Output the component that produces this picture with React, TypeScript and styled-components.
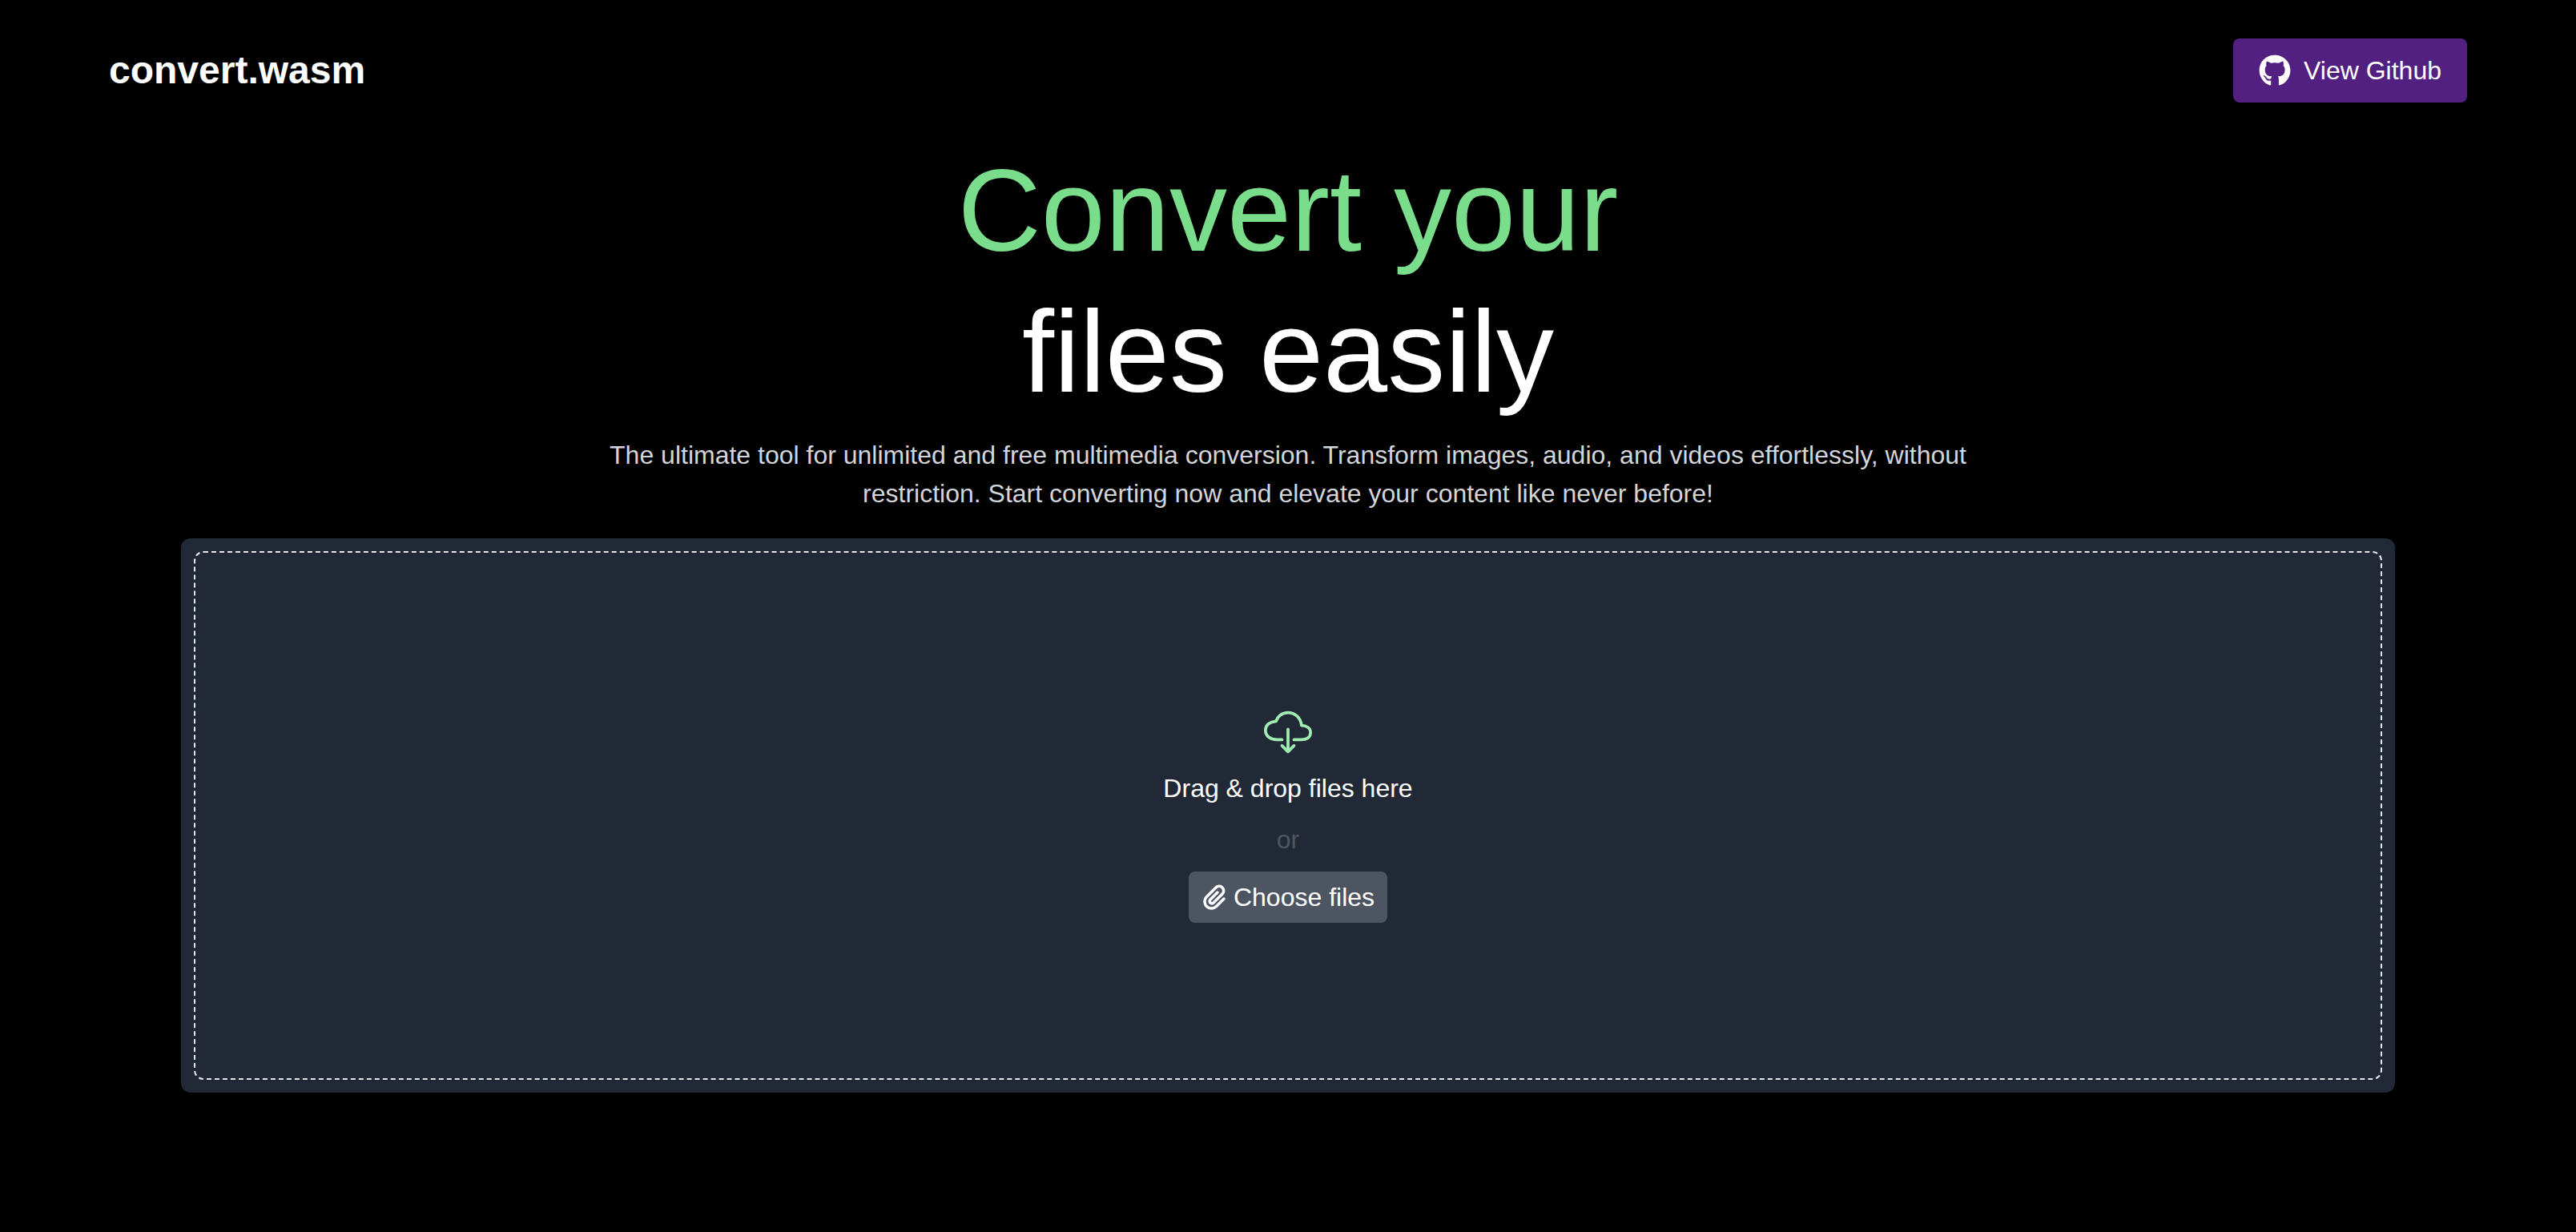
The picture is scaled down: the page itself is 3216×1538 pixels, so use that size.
import React, { useRef } from 'react';
import styled, { createGlobalStyle } from 'styled-components';
import { FaGithub, FaPaperclip } from 'react-icons/fa6';
import { IoCloudDownloadOutline } from 'react-icons/io5';

const GlobalStyle = createGlobalStyle`
  *, *::before, *::after {
    box-sizing: border-box;
  }

  body {
    margin: 0;
    background: #000;
    color: #fff;
    font-family: 'Liberation Sans', Arial, sans-serif;
    font-size: 32px;
    line-height: 48px;
  }
`;

const Page = styled.div`
  padding: 0 136px;
`;

const Header = styled.header`
  display: flex;
  align-items: center;
  justify-content: space-between;
  padding: 48px 0;
`;

const Brand = styled.span`
  font-size: 48px;
  line-height: 64px;
  font-weight: 700;
`;

const GithubLink = styled.a`
  display: flex;
  align-items: center;
  gap: 16px;
  padding: 16px 32px;
  border-radius: 8px;
  background: #522080;
  color: #fff;
  text-decoration: none;

  svg {
    width: 40px;
    height: 40px;
  }
`;

const Main = styled.main`
  display: flex;
  flex-direction: column;
  align-items: center;
  padding: 0 90px;
`;

const Title = styled.h1`
  display: flex;
  flex-direction: column;
  margin: 0 0 16px;
  font-size: 144px;
  line-height: 176px;
  font-weight: 400;
  text-align: center;
`;

const Highlight = styled.span`
  color: #7add8b;
`;

const Description = styled.p`
  max-width: 1792px;
  margin: 0 0 32px;
  color: #d2d5da;
  text-align: center;
`;

const Panel = styled.section`
  display: flex;
  width: 100%;
  min-height: 45vh;
  padding: 16px;
  border-radius: 12px;
  background: #222936;
`;

const DropZone = styled.div`
  display: flex;
  flex: 1;
  flex-direction: column;
  align-items: center;
  justify-content: center;
  gap: 16px;
  border: 2px dashed #e5e7eb;
  border-radius: 12px;
`;

const CloudIcon = styled(IoCloudDownloadOutline)`
  width: 60px;
  height: 60px;
  color: #a0edb1;
`;

const Muted = styled.span`
  color: #4e5562;
`;

const ChooseButton = styled.button`
  display: flex;
  align-items: center;
  gap: 8px;
  padding: 8px 16px;
  border: 0;
  border-radius: 8px;
  background: #4e5562;
  color: inherit;
  font: inherit;
  cursor: pointer;

  svg {
    width: 32px;
    height: 32px;
  }
`;

export default function App() {
  const picker = useRef<HTMLInputElement>(null);

  return (
    <Page>
      <GlobalStyle />
      <Header>
        <Brand>convert.wasm</Brand>
        <GithubLink href="https://github.com">
          <FaGithub aria-hidden="true" />
          View Github
        </GithubLink>
      </Header>
      <Main>
        <Title>
          <Highlight>Convert your</Highlight>
          <span>files easily</span>
        </Title>
        <Description>
          The ultimate tool for unlimited and free multimedia conversion. Transform images, audio,
          and videos effortlessly, without restriction. Start converting now and elevate your
          content like never before!
        </Description>
        <Panel>
          <DropZone>
            <CloudIcon aria-hidden="true" />
            <span>Drag &amp; drop files here</span>
            <Muted>or</Muted>
            <ChooseButton type="button" onClick={() => picker.current?.click()}>
              <FaPaperclip aria-hidden="true" />
              Choose files
            </ChooseButton>
            <input ref={picker} type="file" multiple hidden />
          </DropZone>
        </Panel>
      </Main>
    </Page>
  );
}
